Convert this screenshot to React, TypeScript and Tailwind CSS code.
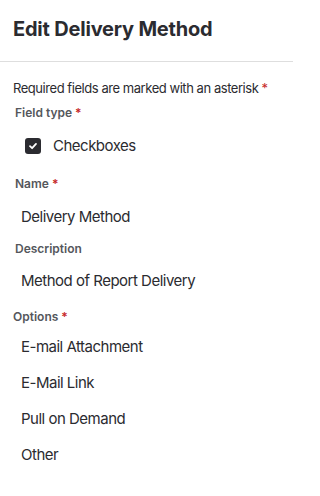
import React from "react";

const Req = () => <span className="text-[#c62828] ml-[3px]">*</span>;

export default function App() {
  const font = { fontFamily: "Inter, 'Noto Sans', sans-serif" };
  const options = ["E-mail Attachment", "E-Mail Link", "Pull on Demand", "Other"];
  return (
    <div className="w-[293px] h-[496px] bg-white text-[#2b2b30] overflow-hidden" style={font}>
      <div className="h-[62px] border-b border-[#dedede] px-[13px] pt-[16px]">
        <h1 className="text-[20px] leading-[26px] font-bold tracking-[-0.2px] text-[#2b2b30]">Edit Delivery Method</h1>
      </div>
      <div className="px-[13px] pt-[17px]">
        <p className="text-[13px] leading-[18px] tracking-[-0.45px] whitespace-nowrap text-[#2b2b30]">
          Required fields are marked with an asterisk<Req />
        </p>
        <div className="mt-[8px] pl-[2px] text-[12px] leading-[16px] font-semibold text-[#55575c]">
          Field type<Req />
        </div>
        <div className="mt-[15px] pl-[12px] flex items-center gap-[12px]">
          <div className="w-[16px] h-[16px] rounded-[3px] bg-[#2b2b30] flex items-center justify-center">
            <svg width="10" height="10" viewBox="0 0 10 10" fill="none">
              <path d="M2 5.2 L4.1 7.2 L8 2.9" stroke="white" strokeWidth="1.8" strokeLinecap="round" strokeLinejoin="round" />
            </svg>
          </div>
          <span className="text-[15px] leading-[20px] tracking-[-0.5px]">Checkboxes</span>
        </div>
        <div className="mt-[20px] pl-[2px] text-[12px] leading-[16px] font-semibold text-[#55575c]">
          Name<Req />
        </div>
        <div className="mt-[15px] pl-[8px] text-[15px] leading-[20px] tracking-[-0.5px]">Delivery Method</div>
        <div className="mt-[14px] pl-[2px] text-[12px] leading-[16px] font-semibold text-[#55575c]">
          Description
        </div>
        <div className="mt-[14px] pl-[8px] text-[15px] leading-[20px] tracking-[-0.5px]">Method of Report Delivery</div>
        <div className="mt-[18px] text-[12px] leading-[16px] font-semibold text-[#55575c]">
          Options<Req />
        </div>
        <div className="mt-[12px] pl-[8px] flex flex-col gap-[16px]">
          {options.map((o) => (
            <div key={o} className="text-[15px] leading-[20px] tracking-[-0.5px]">{o}</div>
          ))}
        </div>
      </div>
    </div>
  );
}
